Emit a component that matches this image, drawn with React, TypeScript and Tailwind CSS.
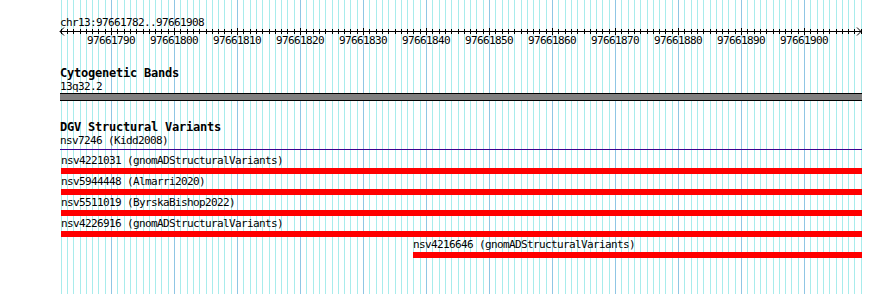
const START = 97661782;
const END = 97661909;
const X0 = 60.6;
const PX = 6.3;

const xAt = (p: number) => Math.round(X0 + (p - START) * PX);

const positions: number[] = [];
for (let p = START; p <= END; p++) positions.push(p);

const mono = { fontFamily: '"DejaVu Sans Mono", "Liberation Mono", monospace' };

const variants = [
  { id: "nsv4221031", src: "gnomADStructuralVariants", from: START },
  { id: "nsv5944448", src: "Almarri2020", from: START },
  { id: "nsv5511019", src: "ByrskaBishop2022", from: START },
  { id: "nsv4226916", src: "gnomADStructuralVariants", from: START },
  { id: "nsv4216646", src: "gnomADStructuralVariants", from: 97661838 },
];

function Grid() {
  return (
    <svg className="absolute inset-0" width={890} height={294}>
      {positions.map((p) => (
        <line
          key={p}
          x1={xAt(p) + 0.5}
          x2={xAt(p) + 0.5}
          y1={0}
          y2={294}
          stroke={p % 10 === 0 ? "#8fc6e4" : "#a8ecec"}
          strokeWidth={1}
        />
      ))}
    </svg>
  );
}

function Ruler() {
  const y = 2.5;
  return (
    <svg width={802} height={18} className="block overflow-visible">
      <line x1={0} x2={802} y1={y} y2={y} stroke="#000" />
      <polyline points={`4,${y - 4} 0,${y} 4,${y + 4}`} fill="none" stroke="#000" />
      <polyline points={`797,${y - 4} 801,${y} 797,${y + 4}`} fill="none" stroke="#000" />
      {positions.map((p) => {
        const x = xAt(p) - 60 + 0.5;
        const major = p % 10 === 0;
        return (
          <line
            key={p}
            x1={x}
            x2={x}
            y1={major ? y - 3.5 : y - 2.5}
            y2={major ? y + 3.5 : y + 2.5}
            stroke="#000"
          />
        );
      })}
      {positions
        .filter((p) => p % 10 === 0)
        .map((p) => (
          <text
            key={p}
            x={xAt(p) - 60}
            y={14.5}
            textAnchor="middle"
            fontSize={11}
            letterSpacing={-0.62}
            fill="#000"
            style={mono}
          >
            {p}
          </text>
        ))}
    </svg>
  );
}

export default function App() {
  return (
    <div className="relative w-[890px] h-[294px] bg-white overflow-hidden text-black">
      <Grid />
      <div
        className="relative flex flex-col pl-[60px] pt-[16px] w-[862px] text-[11px] tracking-[-0.62px] leading-[13px]"
        style={mono}
      >
        <div className="h-[13px]">chr13:97661782..97661908</div>
        <Ruler />

        <div className="mt-[20px] h-[13px] text-[12px] tracking-[-0.22px] font-bold">Cytogenetic Bands</div>
        <div className="h-[13px]">13q32.2</div>
        <div className="h-[8px] border-y border-black bg-[#808080]" />

        <div className="mt-[20px] h-[13px] text-[12px] tracking-[-0.22px] font-bold">DGV Structural Variants</div>
        <div className="h-[13px]">nsv7246 (Kidd2008)</div>
        <div className="mt-[2px] h-px bg-[#3c0090]" />

        <div className="mt-[4px] flex flex-col gap-[1px]">
          {variants.map((v) => {
            const off = xAt(v.from) - 60;
            return (
              <div key={v.id} className="flex flex-col" style={{ paddingLeft: off }}>
                <div className="h-[13px] whitespace-nowrap">
                  {v.id} ({v.src})
                </div>
                <div className="mt-[1px] h-[6px] bg-[#ff0000]" />
              </div>
            );
          })}
        </div>
      </div>
    </div>
  );
}
